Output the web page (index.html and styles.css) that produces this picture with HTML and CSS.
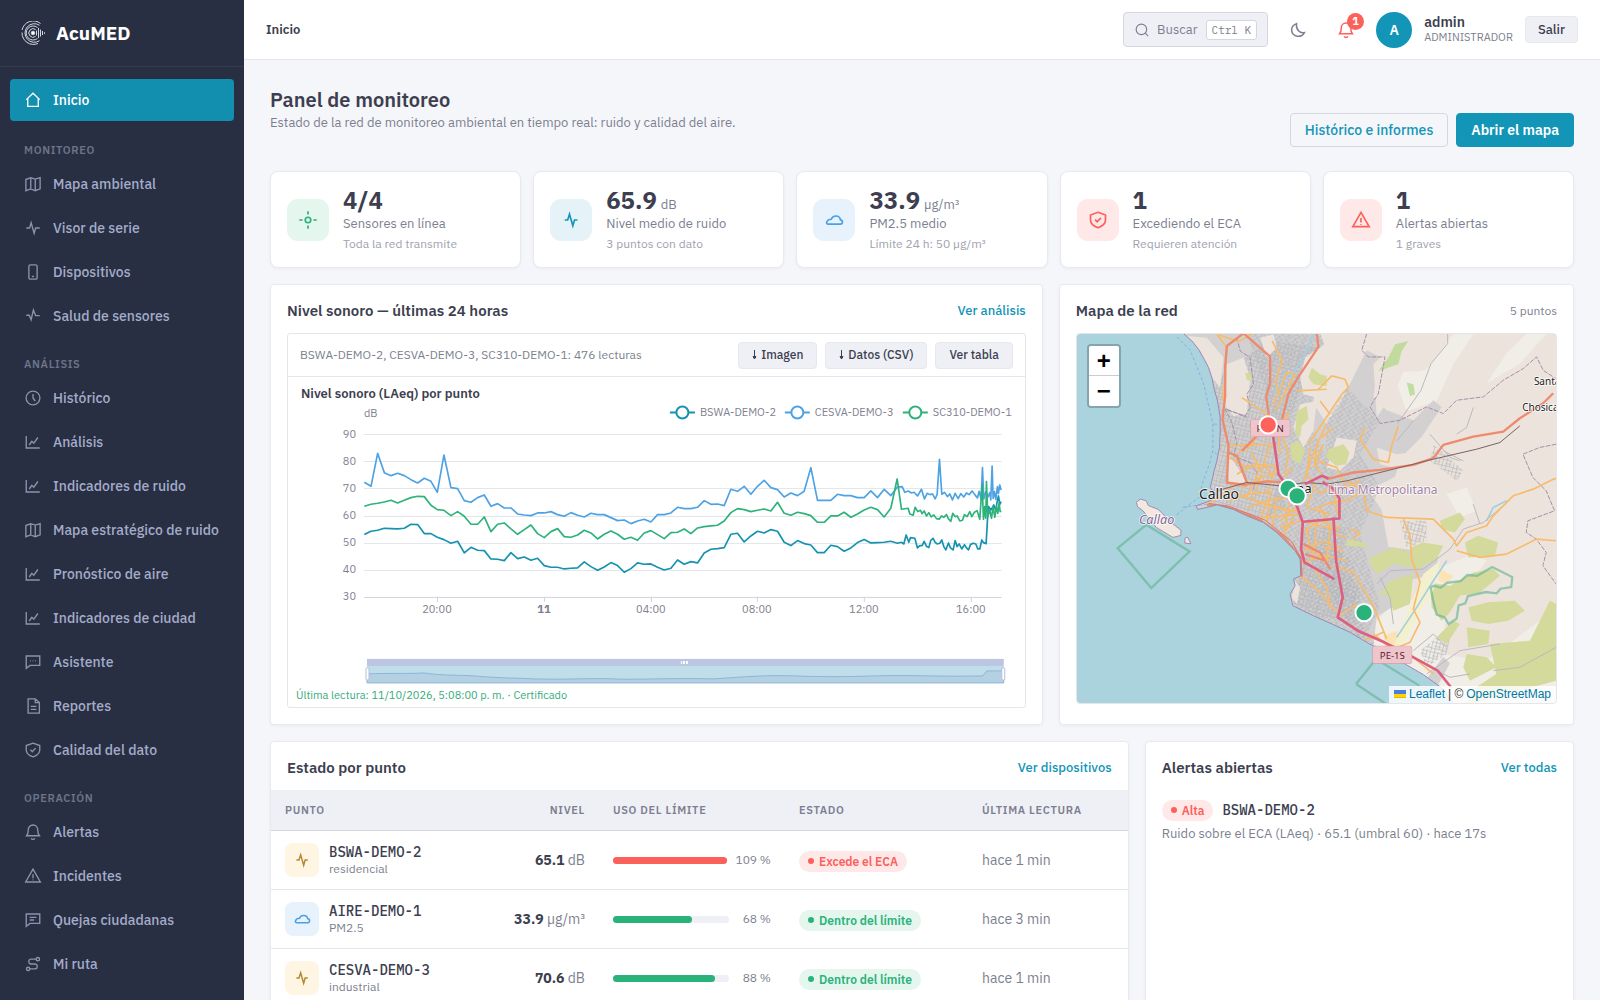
FILE: index.html
```html
<!DOCTYPE html>
<html lang="es">
<head>
<meta charset="utf-8">
<meta name="viewport" content="width=device-width, initial-scale=1">
<title>AcuMED · Panel de monitoreo</title>
<link rel="stylesheet" href="styles.css">
</head>
<body>
<svg class="sprite" aria-hidden="true">
  <symbol id="i-home" viewBox="0 0 24 24"><path d="M3 11.500 12 3l9 8.500M5 10v10.500h14V10"/></symbol>
  <symbol id="i-map" viewBox="0 0 24 24"><path d="M2.500 6 9 3.500 15 5.500l6.500-2v15L15 21l-6-2.500L2.500 21zM9 3.500v15M15 5.500V21"/></symbol>
  <symbol id="i-pulse" viewBox="0 0 24 24"><path d="M3 12h4.500l2-7 4 14 2-7H21"/></symbol>
  <symbol id="i-wave" viewBox="0 0 24 24"><path d="M4.500 12H8l2.200-7 4 14 2-7h3.500"/></symbol>
  <symbol id="i-beat" viewBox="0 0 24 24"><path d="M3 11h4l2.500 6L12.500 4l3 7.500H21"/></symbol>
  <symbol id="i-phone" viewBox="0 0 24 24"><rect x="6.500" y="2.500" width="11" height="19" rx="2"/><path d="M10.500 18h3"/></symbol>
  <symbol id="i-clock" viewBox="0 0 24 24"><circle cx="12" cy="12" r="9.200"/><path d="M12 6.500V12l3 4"/></symbol>
  <symbol id="i-chart" viewBox="0 0 24 24"><path d="M3 4v16h18M7 16l3.500-5 2.500 2.500L18.500 6"/></symbol>
  <symbol id="i-chat" viewBox="0 0 24 24"><path d="M3 4h18v12.500H8L3 20.500zM8 10.300h.800M11.600 10.300h.800M15.200 10.300h.800"/></symbol>
  <symbol id="i-talk" viewBox="0 0 24 24"><path d="M3 4h18v12.500H8L3 20.500zM7.500 8.500h9M7.500 12h6"/></symbol>
  <symbol id="i-doc" viewBox="0 0 24 24"><path d="M5.500 2.500H15l5.500 5v14h-15zM15 2.500v5h5.500M9 12.500h7.500M9 16.500h7.500"/></symbol>
  <symbol id="i-shield" viewBox="0 0 24 24"><path d="M12 2.800 21 6v6c0 4.500-4 7.500-9 9.200C7 19.500 3 16.500 3 12V6zM8.500 11.500l2.500 2.700 4.500-4.700"/></symbol>
  <symbol id="i-bell" viewBox="0 0 24 24"><path d="M3.500 17h17c-1.700-2-2.200-4-2.200-8 0-3.500-2.600-6.300-6.300-6.300S5.700 5.500 5.700 9c0 4-.500 6-2.200 8zM9.500 20.500c1 1.800 4 1.800 5 0"/></symbol>
  <symbol id="i-warn" viewBox="0 0 24 24"><path d="M12 2.800 21.800 20H2.200zM12 9.500V15M12 16.800v1"/></symbol>
  <symbol id="i-route" viewBox="0 0 24 24"><circle cx="5.500" cy="18.500" r="2.200"/><circle cx="18.500" cy="5.500" r="2.200"/><path d="M16.300 5.500H9a3.300 3.300 0 0 0 0 6.500h6a3.300 3.300 0 0 1 0 6.500H7.700"/></symbol>
  <symbol id="i-search" viewBox="0 0 24 24"><circle cx="11" cy="11" r="9"/><path d="m17.500 17.500 5 5"/></symbol>
  <symbol id="i-moon" viewBox="0 0 24 24"><path d="M10 3.500C6 5 3.500 8 3.500 12a9 9 0 0 0 17 3.500c-6 1.500-11.500-4-10.500-12z"/></symbol>
  <symbol id="i-cloud" viewBox="0 0 24 24"><path d="M5 17h14.300a2.600 2.600 0 0 0 .400-5.200C19.300 8.900 17.300 7.200 14.300 7.200c-2.800 0-4.800 1.500-5.600 3.900C6 11.100 3.700 12.600 3.200 15c-.200 1.200.600 2 1.800 2z"/></symbol>
  <symbol id="i-sensor" viewBox="0 0 24 24"><circle cx="12" cy="12" r="3.300"/><path d="M12 1.500v4M12 18.500v4M1.500 12h4M18.500 12h4"/></symbol>
  <symbol id="i-down" viewBox="0 0 5 10"><path d="M2.500 0v7M1 6.500h3L2.500 9z"/></symbol>
</svg>
<div class="app">
  <aside class="sidebar">
    <div class="brand">
      <svg viewBox="0 0 24 24" class="logo"><circle cx="12" cy="12" r="1.800" class="dot"/><path d="M14.600 8.500A4.300 4.300 0 1 0 14.600 15.500M16.500 6.500A7 7 0 1 0 16.500 17.500M18.500 4.300A9.300 9.300 0 1 0 18.500 19.700M19.500 2.500A11.500 11.500 0 0 0 1 9M1 11.500A11.500 11.500 0 0 0 17 22.500M15.500 9.500v5M17.500 7v10M19.500 8.500v7M21.500 10v4M23.500 11.300v1.500"/></svg>
      <span>AcuMED</span>
    </div>
    <nav class="menu">
      <a class="item active" href="#inicio"><svg><use href="#i-home"/></svg>Inicio</a>
      <h2>MONITOREO</h2>
      <a class="item" href="#mapa"><svg><use href="#i-map"/></svg>Mapa ambiental</a>
      <a class="item" href="#visor"><svg><use href="#i-pulse"/></svg>Visor de serie</a>
      <a class="item" href="#dispositivos"><svg><use href="#i-phone"/></svg>Dispositivos</a>
      <a class="item" href="#salud"><svg><use href="#i-beat"/></svg>Salud de sensores</a>
      <h2>ANÁLISIS</h2>
      <a class="item" href="#historico"><svg><use href="#i-clock"/></svg>Histórico</a>
      <a class="item" href="#analisis"><svg><use href="#i-chart"/></svg>Análisis</a>
      <a class="item" href="#ruido"><svg><use href="#i-chart"/></svg>Indicadores de ruido</a>
      <a class="item" href="#estrategico"><svg><use href="#i-map"/></svg>Mapa estratégico de ruido</a>
      <a class="item" href="#pronostico"><svg><use href="#i-chart"/></svg>Pronóstico de aire</a>
      <a class="item" href="#ciudad"><svg><use href="#i-chart"/></svg>Indicadores de ciudad</a>
      <a class="item" href="#asistente"><svg><use href="#i-chat"/></svg>Asistente</a>
      <a class="item" href="#reportes"><svg><use href="#i-doc"/></svg>Reportes</a>
      <a class="item" href="#calidad"><svg><use href="#i-shield"/></svg>Calidad del dato</a>
      <h2>OPERACIÓN</h2>
      <a class="item" href="#alertas"><svg><use href="#i-bell"/></svg>Alertas</a>
      <a class="item" href="#incidentes"><svg><use href="#i-warn"/></svg>Incidentes</a>
      <a class="item" href="#quejas"><svg><use href="#i-talk"/></svg>Quejas ciudadanas</a>
      <a class="item" href="#ruta"><svg><use href="#i-route"/></svg>Mi ruta</a>
    </nav>
  </aside>

  <div class="page">
    <header class="topbar">
      <strong class="crumb">Inicio</strong>
      <button class="search" type="button"><svg><use href="#i-search"/></svg>Buscar<kbd>Ctrl K</kbd></button>
      <button class="round" type="button" aria-label="Tema oscuro"><svg><use href="#i-moon"/></svg></button>
      <button class="round bell" type="button" aria-label="Alertas"><svg><use href="#i-bell"/></svg><span class="count">1</span></button>
      <span class="avatar">A</span>
      <div class="who"><strong>admin</strong><span>ADMINISTRADOR</span></div>
      <button class="soft" type="button">Salir</button>
    </header>

    <main class="content">
      <div class="head">
        <div class="heading">
          <h1>Panel de monitoreo</h1>
          <p>Estado de la red de monitoreo ambiental en tiempo real: ruido y calidad del aire.</p>
        </div>
        <div class="actions">
          <a class="btn outline" href="#informes">Histórico e informes</a>
          <a class="btn solid" href="#mapa">Abrir el mapa</a>
        </div>
      </div>

      <section class="kpis">
        <article class="card kpi"><span class="chip green"><svg><use href="#i-sensor"/></svg></span><div><div class="value"><b>4/4</b></div><p>Sensores en línea</p><small>Toda la red transmite</small></div></article>
        <article class="card kpi"><span class="chip teal"><svg><use href="#i-wave"/></svg></span><div><div class="value"><b>65.9</b><span>dB</span></div><p>Nivel medio de ruido</p><small>3 puntos con dato</small></div></article>
        <article class="card kpi"><span class="chip blue"><svg><use href="#i-cloud"/></svg></span><div><div class="value"><b>33.9</b><span>µg/m³</span></div><p>PM2.5 medio</p><small>Límite 24 h: 50 µg/m³</small></div></article>
        <article class="card kpi"><span class="chip red"><svg><use href="#i-shield"/></svg></span><div><div class="value"><b>1</b></div><p>Excediendo el ECA</p><small>Requieren atención</small></div></article>
        <article class="card kpi"><span class="chip red"><svg><use href="#i-warn"/></svg></span><div><div class="value"><b>1</b></div><p>Alertas abiertas</p><small>1 graves</small></div></article>
      </section>

      <section class="row charts">
        <article class="card pad">
          <div class="card-head"><h3>Nivel sonoro — últimas 24 horas</h3><a href="#analisis">Ver análisis</a></div>
          <div class="plot">
            <div class="plot-bar">
              <span>BSWA-DEMO-2, CESVA-DEMO-3, SC310-DEMO-1: 476 lecturas</span>
              <button class="soft" type="button"><svg><use href="#i-down"/></svg>Imagen</button>
              <button class="soft" type="button"><svg><use href="#i-down"/></svg>Datos (CSV)</button>
              <button class="soft" type="button">Ver tabla</button>
            </div>
            <svg class="chart" viewBox="0 0 737 310" role="img" aria-label="Nivel sonoro (LAeq) por punto">
              <text class="ct" x="13" y="21">Nivel sonoro (LAeq) por punto</text>
              <text x="76" y="40">dB</text>
              <g class="legend">
                <g stroke="#1592b0"><path d="M382 35.500h25"/><circle cx="394.500" cy="35.500" r="6"/></g><text x="412" y="39">BSWA-DEMO-2</text>
                <g stroke="#4da2e4"><path d="M497 35.500h25"/><circle cx="509.500" cy="35.500" r="6"/></g><text x="527" y="39">CESVA-DEMO-3</text>
                <g stroke="#2eb27c"><path d="M615 35.500h25"/><circle cx="627.500" cy="35.500" r="6"/></g><text x="645" y="39">SC310-DEMO-1</text>
              </g>
              <path class="grid" d="M76 57.500h638M76 84.500h638M76 111.500h638M76 139.500h638M76 166.500h638M76 193.500h638"/>
              <path class="axis" d="M76 220.500h638M149.500 220v5M256.500 220v5M363.500 220v5M469.500 220v5M576.500 220v5M683.500 220v5"/>
              <g class="ylab"><text x="68" y="61">90</text><text x="68" y="88">80</text><text x="68" y="115">70</text><text x="68" y="142">60</text><text x="68" y="169">50</text><text x="68" y="196">40</text><text x="68" y="223">30</text></g>
              <g class="xlab"><text x="149" y="236">20:00</text><text x="256" y="236" font-weight="700">11</text><text x="363" y="236">04:00</text><text x="469" y="236">08:00</text><text x="576" y="236">12:00</text><text x="683" y="236">16:00</text></g>
              <g class="series" transform="translate(-18 -57) scale(.33333)">
                <path stroke="#1592b0" d="M283 644 303 634 323 631 343 625 363 626 383 627 403 625 423 613 443 614 463 641 483 641 502 652 522 659 543 670 563 664 583 699 603 682 623 691 643 692 663 717 683 718 703 722 723 698 743 716 763 711 783 721 803 715 823 737 843 742 863 742 883 747 903 745 923 744 943 726 963 740 983 751 1003 741 1023 728 1043 737 1063 757 1083 746 1103 729 1123 733 1143 732 1163 742 1183 750 1203 745 1223 720 1243 733 1263 725 1283 729 1303 699 1323 688 1343 686 1363 683 1383 643 1403 640 1423 666 1443 648 1463 634 1483 639 1503 629 1523 634 1543 667 1563 677 1583 662 1603 671 1623 675 1643 698 1663 698 1683 676 1703 680 1723 694 1743 684 1763 668 1783 659 1803 669 1823 668 1843 667 1863 664 1883 670 1895 667 1902 672 1909 645 1917 667 1922 653 1935 655 1943 684 1950 677 1957 677 1963 664 1970 679 1977 683 1983 661 1990 655 1996 667 2002 672 2010 670 2016 660 2022 680 2028 690 2036 669 2042 684 2050 690 2056 662 2062 680 2068 672 2076 687 2084 674 2090 684 2096 690 2102 674 2110 670 2118 672 2124 687 2130 687 2136 660 2141 668 2149 671 2153 600 2156 560 2164 570 2172 555 2178 572 2182 545 2186 528 2190 553 2194 545"/>
                <path stroke="#4da2e4" d="M283 487 303 499 323 400 343 458 363 467 383 460 403 467 423 479 443 489 463 475 483 484 502 517 522 405 543 503 563 506 583 542 603 547 623 533 643 525 663 559 683 551 703 564 723 564 743 582 763 585 783 587 803 579 823 579 843 575 863 584 883 589 903 578 923 586 943 591 963 580 983 584 1003 584 1023 593 1043 602 1063 600 1083 611 1103 603 1123 598 1143 606 1163 584 1183 584 1203 579 1223 562 1243 566 1263 566 1283 562 1303 542 1323 553 1343 552 1363 557 1383 508 1403 514 1423 499 1443 523 1463 499 1483 481 1503 503 1523 509 1543 531 1563 519 1583 527 1603 514 1623 443 1643 541 1683 541 1703 523 1723 527 1743 527 1763 533 1783 533 1803 513 1823 533 1843 508 1863 527 1883 501 1897 500 1905 517 1915 513 1925 519 1933 517 1943 528 1955 508 1964 537 1972 520 1980 524 1988 522 1996 537 2002 523 2009 418 2016 523 2024 517 2033 530 2040 522 2048 540 2056 520 2065 536 2073 521 2082 531 2090 519 2098 524 2107 513 2115 524 2123 534 2128 514 2134 537 2138 443 2142 537 2148 515 2154 532 2160 518 2163 540 2167 438 2170 535 2174 515 2178 538 2183 500 2186 520 2190 495 2194 510"/>
                <path stroke="#2eb27c" d="M283 559 303 553 323 550 343 546 363 541 383 549 403 541 423 533 443 529 463 530 483 556 502 569 522 571 543 587 563 575 583 589 603 613 623 613 643 591 663 635 683 613 703 609 723 627 743 643 763 629 783 615 803 641 823 653 843 635 863 626 883 650 903 652 923 645 943 631 963 639 983 657 1003 643 1023 633 1043 643 1063 658 1083 652 1103 661 1123 639 1143 632 1163 644 1183 656 1203 638 1223 637 1243 627 1263 641 1283 624 1303 620 1323 618 1343 616 1363 603 1383 578 1403 566 1423 569 1443 575 1463 571 1483 567 1503 573 1523 547 1543 580 1563 586 1583 577 1603 581 1623 587 1643 607 1663 607 1683 588 1703 588 1723 577 1743 592 1763 582 1783 570 1803 562 1823 569 1843 591 1863 565 1882 477 1895 568 1915 565 1920 582 1930 586 1936 562 1944 575 1952 571 1957 581 1963 573 1970 588 1977 578 1984 591 1992 585 2000 596 2008 598 2015 588 2022 592 2030 584 2036 597 2043 604 2049 580 2056 590 2062 588 2070 603 2078 601 2084 584 2092 590 2100 575 2106 590 2114 577 2122 572 2130 598 2137 492 2141 598 2145 560 2148 595 2150 485 2154 590 2160 570 2165 595 2170 560 2175 592 2180 560 2184 580 2188 548 2191 575 2194 572"/>
              </g>
              <g class="slider">
                <rect x="79" y="282" width="637" height="8" fill="#bcc5e2"/>
                <rect x="79" y="289" width="637" height="17" fill="#bfdeea"/>
                <path class="area" d="M79 297c30-1 40 0 57-1 20 3 35 2 50 3 20 2 40 2 60 3 30 1 60-1 80 0 20 1 60-1 100 0 30-2 50-4 80-3 30 1 50 1 80 0 40-1 70 1 109 0l4-5h17v12H79z"/>
                <path fill="#fff" d="M393 284h1v3h-1zM395 284h2v3h-2zM398 284h2v3h-2z"/>
                <rect class="grip" x="78" y="291" width="3" height="12" rx="1"/><rect class="grip" x="714" y="291" width="3" height="12" rx="1"/>
              </g>
            </svg>
            <p class="plot-foot">Última lectura: 11/10/2026, 5:08:00 p. m. · Certificado</p>
          </div>
        </article>

        <article class="card pad net">
          <div class="card-head"><h3>Mapa de la red</h3><span>5 puntos</span></div>
          <div class="map">
            <svg viewBox="50 38 1439 1110" preserveAspectRatio="xMidYMid slice" role="img" aria-label="Mapa de Lima y Callao">
              <defs>
                <pattern id="st1" width="34" height="30" patternUnits="userSpaceOnUse" patternTransform="rotate(14)"><path d="M0 4h34M0 15h20M0 23h34M5 0v30M16 0v23M27 4v26"/></pattern>
                <pattern id="st2" width="36" height="32" patternUnits="userSpaceOnUse" patternTransform="rotate(-32)"><path d="M0 5h36M8 17h28M0 26h36M6 0v32M18 5v21M29 0v17"/></pattern>
                <clipPath id="land"><path d="M370 38 395 60 415 85 432 115 445 140 455 170 462 205 472 240 480 290 480 330 478 380 470 420 462 450 455 480 450 500 466 520 450 540 408 555 412 566 440 560 470 552 520 566 560 585 610 605 650 635 680 665 705 690 720 715 722 765 700 775 705 795 690 820 698 855 760 885 820 912 870 935 920 965 955 985 1035 1030 1090 1062 1140 1098 1165 1125 1185 1150H1490V37z"/></clipPath>
              </defs>
              <path fill="#abd3de" d="M50 37h1440v1112H50z"/>
              <g clip-path="url(#land)">
                <path fill="#ece4dc" d="M350 37h1140v1112H350z"/>
                <path fill="#f1eee8" d="M1000 160c60-20 90 10 120-40l60-80h60l-60 90-50 110-90 30zM1400 38h60l-80 90-100 60 60-90zM1160 520l60-20 30 70-50 20zM900 950l100-100 80-20 60-90 100-40 40 20-120 160-20 120 140 20 160-120 149-20v277H1180z"/>
                <path class="urban" d="M370 38h410l20 50-30 70-10 90 40 60 40-60 40-80 40-80 40 20-20 120 40 40 80 30 60-60 25 20-60 90-60 60-20 60-80 40 40 60 20 110 70 10 80 10-5 60-80 20-20 60-80 50-10 90-20 50 30 80 60 40 80-60 60-80 20 20-60 110-60 60-120-50-200-120-220-85-10-40 20-70-10-60-150-110-250-60 40-110 20-140-30-130z"/>
                <path class="st" fill="url(#st1)" d="M460 180 620 60 780 80 700 260 640 420 680 560 600 600 440 555 480 400z"/>
                <path class="st" fill="url(#st2)" d="M560 38h220l20 50-60 200 60 120-20 240 100 70 10 150 40 80 60 80-60 20-220-100-10-120-100-170 60-200-40-240z"/>
                <path class="st" fill="url(#st1)" d="M720 620 860 620 840 740 900 800 900 900 780 890 700 850 720 760z"/>
                <path class="st" fill="url(#st2)" d="M800 300 860 200 900 240 960 300 900 400 960 500 900 640 960 860 900 980 780 760z"/>
                <path class="st" fill="url(#st1)" d="M1020 600h80v60l-60 20zM1120 370l90 80-20 30-80-60zM1080 990l100-80-20 90-60 40z"/>
                <path fill="#ece4dc" d="M500 130l50-20 20 60-10 110-40 5-25-30zM600 50l40-10 10 40-30 30zM735 110l75-50v180l-80-20-10-50zM720 250l50-10-10 90-30 50-30-60zM380 45l60 5 50 60-10 90-25-30-35-80zM505 400l55 80-20 12-35-5zM800 440l30-90 60 10-10 50-40 40zM940 130l60-60 50 40-40 90-60 90zM950 380l60 20 80-10-60 60-70-20zM705 780l15 20-10 50-15-20z"/>
                <g class="olive"><path d="M755 140l25 20 20 5v30l-40-5-15-20zM710 270l30-15 5 40-20 20-5 35-15-10zM690 370l25-10 20 30-15 40-25-15zM555 155l20 5v20l-15-3zM805 385l45-15 18 25-10 35-30 5-30-25zM930 710l70-30 40 10 20 50-60-10-50 30-20-30zM1050 680l40-15 60 10-20 40-60 30-20-30zM990 780l70-20-10 90-50 20-20-50-25 5zM1140 600l60-25 15 20-30 40-40-10zM1215 665l40-20 60 20-10 40-80 5zM1110 785l60 10 70-40 60-10 20 20-60 50-60 10-30 50-25 25-30-40zM1225 860l60-15 80-5 30 30-50 30-60 10-50-10zM1220 920l70 10-5 40-60 10zM1290 970l120-10 60-120 19 10v230l-220 60-60 20 40-60 60-40zM860 655l50 10 20 15-70-5zM1220 1000l60 10 30 30-80 40-20-40zM1130 950l50-50 20 10-40 60z"/></g>
                <g fill="#b7d88e"><path d="M985 110l20-40 40-10-20 30-10 40-60 20zM1050 225l-10-40 20 5 5 30z" opacity=".8"/></g>
                <path fill="#fbe3b4" d="M1140 745l40 20-20 25-25-10zM970 945l40-15 10 40-40 10z"/>
                <path fill="#f3f0cd" d="M1090 760l50-40-20 90-50 80-40 80-30 10 40-100z"/>
                <g fill="none" stroke="#a4cfe0" stroke-width="5"><path d="M1010 950l60-90 50-80 40-60M1280 600l20-40 40-20M690 170l40-60 30-72M640 215l50-60"/></g>
                <g fill="none" stroke="#b9b9bd" stroke-width="3"><path d="M950 790l40-40 100-5 80-60 40-60 60-20 60-50M1163 38v30l-50 60-30 80-70 100M1060 300l-50 60M1110 340l60 70 30 10M1150 390l60 30M1240 260l-20 60-30 20M1260 610l-20-60M960 770l30 60 10 80M1060 990l60-50 40 40M1100 1060l100-70 120-20M1300 1050l80-10 109-60M1110 1040l60 30 60-10"/></g>
                <g class="boundary"><path d="M530 50l10 40 30 20 10 80-20 30 10 40-15 25-60-20 20 40 15 60-10 40 50 20 20 30-10 50M500 265l60 25M920 38l-15 50 20 20 50 0-20 110-25 40 30 50 60-10 80-40 50 20 40-40 80-10 60-50 60-35 40-35 20 40 60 40M1489 370l-50 10-50 20 30 70 40 40 25 60-80 30-5 35 30 20 30 40-10 40 40 55"/></g>
                <g class="sec"><path d="M470 40l30 40-5 80-8 80M545 230l90 60M500 375l140-5 10 60-30 90M530 400l60-50 30-60M505 410l60 30 60 0M640 250l40-95 25 5-60 110M710 210l90-5M545 500l60-30 50-15M440 555l80-60 100-15M600 600l20-60 60-10 40-20M520 515l110 40 90 20M560 560l100-30M630 370l-20 60 30 40M660 400l-5-60 30-60M750 380l-10 80 40 60 30-20M745 370l60-90 40-60 20-20-10-25-40-10-40 40M770 420l60 20 30 60M790 370l-30 70M720 640l60-40 60 20M730 690l60-30 50 20M660 620l60-20 120 30M780 560l30 60-10 100M860 480l50 30 10 60 60 20 140 5 60 60 10 20 30-40 60-20 20-30 60-60 60-20 60-30 60-15M915 320l-15 35 40 60 45 10 10-50 20-60M1030 595l20 50 5 70 25 70-20 80 20 40-30 60-60 25M1190 690l70 20 80-10 90-45 59 5M820 735l60 20 60 100 20 50 20 50M720 765l50 40 60 70M830 890l60-40M940 940l60 50 60 20 60 50M900 965l70-30M745 430l30-60M830 540l-60 20M660 600l70-60M600 440l-40 90"/>
                  <path d="M505 540l60-20 70-6M530 460l50-30 70 6M575 395l30 60-20 60M630 515l-10 90M650 530l-14 90M690 540l-20 110M580 540l100 30M610 590l110-10M700 590l-30 50M760 500l-20 60 70 20M740 620l10 70 60 30M770 600l-10 110M720 725l80-20 60 15M800 510l60-10 40-20M810 550l60-15 40-30M830 580l-6-80M860 650l-40-10M870 625l30 10-20 20M850 690l-60-10M760 740l40 60 10 60M800 310l-30 60-6 60 20 30M820 320l-35 30M780 240l30 40M680 280l-15 60 20 60-10 60M600 330l-40 60M700 440l-30 30M730 480l20-50M476 42l60 20 40-24M636 60l30 60-20 60 10 40"/></g>
                <g class="trunk"><path d="M500 75l-5 60 0 90-8 70 18 80-5 110 60 8M500 75l50-38 80 70 0 80-12 40 10 70M770 38l5 40-60 90-30 50-20 80M505 395l25 10 30 80M545 390l60-60M560 490l60-8 60 2M440 553l60 5 100 40 70 50 50 60 5 60M730 670l50 25 30 50M800 475l80-20 80-8 100-15 60-20 30-40 90-25 90-15 50-40 70-45 30-30M735 700l60 20"/></g>
                <path fill="none" stroke="#7d5f62" stroke-width="3" d="M470 510l90-25 100 10 80-10 60 5 60-10 60-15 200-50 130-30 70-20 60-50"/>
                <g class="mway"><path d="M632 300l15 100 8 60 25 35 30 60 18 50-5 80 10 40 90 50M728 603l110-10 0-60-20-30-30-20M735 490l50-25 20 8M820 590l8 130 20 110-15 60 60 40 80 35 60 30 100 55 40 50"/></g>
                <path fill="none" stroke="#e2725e" stroke-width="3" d="M445 548l60 8 110 42 80 65 28 50v50"/>
              </g>
              <path fill="none" stroke="#9a86b4" stroke-width="3" d="M370 38 395 60 415 85 432 115 445 140 455 170 462 205 472 240 480 290 480 330 478 380 470 420 462 450 455 480 450 500 466 520 450 540 408 555 412 566 440 560 470 552 520 566 560 585 610 605 650 635 680 665 705 690 720 715 722 765 700 775 705 795 690 820 698 855 760 885 820 912 870 935 920 965 955 985 1035 1030 1090 1062 1140 1098 1165 1125"/>
              <path fill="#f1e8e0" stroke="#a58bb0" stroke-width="3" d="M228 545l12-10 18 5 6 14 30 12 40 40 28 22 0 16-24 6-50-30-40-50-16-12zM374 652l8-3 10 20-18-2z"/>
              <g fill="none" stroke="#6f9fe6" stroke-width="2" stroke-dasharray="9 7"><path d="M350 48l40 40 40 100 28 120 0 80-10 40-22 60-8 40-70 55M470 310h-12M470 400l-12-10M440 550l-80 10"/></g>
              <g fill="none" stroke="#67b394" stroke-opacity=".65" stroke-width="7"><path d="M172 682l86-70 130 80-115 110zM888 1090l60-75 130 80M888 1090l90 60M1112 800l10-5 20 6 20-15 40-5 20-18 30 2 45-26 60 30-3 30-32 5-12 14-32-4-54 12-8 22-20 6-6 40-24 16-12-20-24-8-10-40z"/></g>
              <g class="labels">
                <text x="416" y="535" font-size="42">Callao</text>
                <text class="isle" x="236" y="609" font-size="38">Callao</text>
                <text x="664" y="517" font-size="40">Lima</text>
                <text class="zone" x="802" y="519" font-size="36">Lima Metropolitana</text>
                <text x="1422" y="192" font-size="30">Santa Eulalia</text>
                <text x="1387" y="271" font-size="30">Chosica</text>
                <g class="shield"><rect x="572" y="296" width="117" height="51" rx="5"/><text x="630" y="332">PE-1N</text><rect x="938" y="977" width="117" height="51" rx="5"/><text x="997" y="1014">PE-1S</text></g>
              </g>
              <g class="pins"><circle cx="624" cy="312" r="26" fill="#ff625c"/><circle cx="684" cy="503" r="26"/><circle cx="711" cy="525" r="26"/><circle cx="912" cy="876" r="26"/></g>
            </svg>
            <div class="zoom"><button type="button" aria-label="Acercar">+</button><button type="button" aria-label="Alejar">−</button></div>
            <div class="credit"><svg viewBox="0 0 12 8"><path fill="#4c7be1" d="M0 0h12v4H0z"/><path fill="#ffd500" d="M0 4h12v3H0z"/><path fill="#e0bc00" d="M0 7h12v1H0z"/></svg> <a href="#leaflet">Leaflet</a> | © <a href="#osm">OpenStreetMap</a></div>
          </div>
        </article>
      </section>

      <section class="row status">
        <article class="card">
          <div class="card-head inset"><h3>Estado por punto</h3><a href="#dispositivos">Ver dispositivos</a></div>
          <table>
            <colgroup><col class="c1"><col class="c2"><col class="c3"><col class="c4"><col class="c5"></colgroup>
            <thead><tr><th>PUNTO</th><th class="num">NIVEL</th><th>USO DEL LÍMITE</th><th>ESTADO</th><th>ÚLTIMA LECTURA</th></tr></thead>
            <tbody>
              <tr><td><div class="point"><span class="chip small amber"><svg><use href="#i-wave"/></svg></span><div><code>BSWA-DEMO-2</code><small>residencial</small></div></div></td><td class="num"><b>65.1</b> dB</td><td><div class="use"><span class="bar over"><i style="width:100%"></i></span><span>109 %</span></div></td><td><span class="badge bad">Excede el ECA</span></td><td>hace 1 min</td></tr>
              <tr><td><div class="point"><span class="chip small blue"><svg><use href="#i-cloud"/></svg></span><div><code>AIRE-DEMO-1</code><small>PM2.5</small></div></div></td><td class="num"><b>33.9</b> µg/m³</td><td><div class="use"><span class="bar"><i style="width:68%"></i></span><span>68 %</span></div></td><td><span class="badge ok">Dentro del límite</span></td><td>hace 3 min</td></tr>
              <tr><td><div class="point"><span class="chip small amber"><svg><use href="#i-wave"/></svg></span><div><code>CESVA-DEMO-3</code><small>industrial</small></div></div></td><td class="num"><b>70.6</b> dB</td><td><div class="use"><span class="bar"><i style="width:88%"></i></span><span>88 %</span></div></td><td><span class="badge ok">Dentro del límite</span></td><td>hace 1 min</td></tr>
            </tbody>
          </table>
        </article>
        <article class="card pad alerts">
          <div class="card-head"><h3>Alertas abiertas</h3><a href="#alertas">Ver todas</a></div>
          <div class="alert"><span class="badge bad">Alta</span><code>BSWA-DEMO-2</code></div>
          <p>Ruido sobre el ECA (LAeq) · 65.1 (umbral 60) · hace 17s</p>
        </article>
      </section>
    </main>
  </div>
</div>
</body>
</html>
```
FILE: styles.css
```css
:root {
  --ink: #3d3f50;
  --muted: #7c7f8f;
  --faint: #a0a2ae;
  --line: #e4e6eb;
  --soft: #eff0f6;
  --primary: #1295b7;
  --green: #2ab27b;
  --blue: #4aa0e6;
  --red: #fb605b;
  --mono: "IBM Plex Mono", "Liberation Mono", monospace;
}
* { box-sizing: border-box; }
html { scrollbar-width: none; }
body, h1, h2, h3, p { margin: 0; }
body {
  background: #f5f6fa;
  color: var(--ink);
  font: 14px/20px "IBM Plex Sans", Roboto, sans-serif;
}
a { color: inherit; text-decoration: none; }
button { font: inherit; color: inherit; cursor: pointer; }
svg { display: block; fill: none; stroke: currentColor; stroke-width: 2; }
.sprite { position: absolute; width: 0; height: 0; }
small, code { display: block; }

.app { display: grid; grid-template-columns: 244px minmax(0, 1fr); min-height: 100vh; }

/* Sidebar */
.sidebar {
  position: sticky; top: 0; height: 100vh; overflow: hidden;
  background: #282f42; color: #a4acca;
}
.brand {
  display: flex; align-items: center; gap: 11px;
  height: 67px; padding: 0 21px;
  border-bottom: 1px solid #343a4c;
  color: #fff; font-size: 19px; font-weight: 700;
}
.logo { width: 24px; height: 24px; color: #d5d8e2; stroke-width: 1; }
.logo .dot { fill: #fff; }
.menu { display: grid; gap: 2px; padding: 12px 10px; }
.item {
  display: flex; align-items: center; gap: 11px;
  height: 42px; padding: 0 14px; border-radius: 4px;
  font-weight: 500;
}
.item svg { width: 18px; height: 18px; color: #8c93ae; stroke-width: 1.8; }
.item.active { margin-bottom: 2px; background: #128eaf; color: #fff; }
.item.active svg { color: #fff; }
.menu h2 {
  padding: 17px 14px 3px; color: #6d7389;
  font-size: 11px; line-height: 16px; font-weight: 600; letter-spacing: .06em;
}

/* Top bar */
.topbar {
  display: flex; align-items: center; gap: 12px;
  height: 60px; padding: 0 22px;
  background: #fff; border-bottom: 1px solid var(--line);
}
.crumb { margin-right: auto; font-size: 13px; font-weight: 600; }
.search {
  display: flex; align-items: center; gap: 8px;
  height: 35px; padding: 0 10px 0 11px;
  background: var(--soft); border: 1px solid #d5d7e0; border-radius: 4px;
  color: var(--muted); font-size: 13px;
}
.search svg { width: 14px; height: 14px; }
kbd {
  padding: 0 5px; background: #fff; border: 1px solid #d5d7e0; border-radius: 3px;
  font: 11px/18px var(--mono);
}
.round { display: grid; place-items: center; width: 36px; height: 36px; padding: 0; border: 0; background: none; color: var(--muted); }
.round svg { width: 18px; height: 18px; }
.bell { position: relative; color: var(--red); }
.count {
  position: absolute; top: 1px; right: 0; width: 17px; height: 17px;
  border-radius: 50%; background: var(--red); color: #fff;
  font-size: 11px; line-height: 17px; font-weight: 700;
}
.avatar {
  width: 36px; border-radius: 50%; background: var(--primary); color: #fff;
  line-height: 36px; font-weight: 600; text-align: center;
}
.who strong, .who span { display: block; line-height: 15px; }
.who strong { font-weight: 600; }
.who span { color: var(--muted); font-size: 11px; }
.soft {
  display: flex; align-items: center; gap: 4px;
  height: 27px; padding: 0 12px;
  background: var(--soft); border: 1px solid #e7e8ef; border-radius: 4px;
  font-size: 13px; font-weight: 500;
}
.soft svg { width: 5px; height: 10px; fill: currentColor; stroke-width: 1; }

/* Page */
.content { display: grid; gap: 16px; padding: 26px; }
.head { display: flex; justify-content: space-between; align-items: flex-end; margin-bottom: 8px; }
.heading { margin-bottom: 14px; }
h1 { font-size: 20px; line-height: 27px; font-weight: 600; }
.heading p { color: var(--muted); font-size: 13px; }
.actions { display: flex; gap: 8px; }
.btn { padding: 0 14px; border: 1px solid var(--primary); border-radius: 4px; line-height: 32px; font-weight: 500; }
.outline { border-color: #d5d7e0; color: var(--primary); }
.solid { background: var(--primary); color: #fff; font-weight: 600; }
.card { min-width: 0; background: #fff; border: 1px solid #e8eaef; border-radius: 4px; box-shadow: 0 1px 3px rgba(60, 70, 100, .06); }
.pad { padding: 16px; }

.kpis { display: grid; grid-template-columns: repeat(5, minmax(0, 1fr)); gap: 12px; }
.kpi { display: flex; align-items: center; gap: 14px; padding: 14px 16px; border-radius: 8px; }
.value { display: flex; align-items: baseline; gap: 4px; height: 28px; }
.value b { font-size: 24px; line-height: 28px; font-weight: 700; }
.value span { color: var(--muted); font-size: 13px; }
.kpi p { color: var(--muted); font-size: 13px; }
.kpi small { color: var(--faint); font-size: 12px; line-height: 19px; }
.kpi small, .kpi p { white-space: nowrap; }
.kpi .chip svg { width: 20px; height: 20px; }
.chip { display: grid; place-items: center; flex: none; width: 42px; height: 42px; border-radius: 11px; }
.chip.small { width: 34px; height: 34px; border-radius: 8px; }
.chip.small svg { width: 18px; height: 18px; }
.green { background: #e4f6ee; color: var(--green); }
.teal { background: #e5f3f8; color: var(--primary); }
.blue { background: #e7f2fd; color: var(--blue); }
.red { background: #ffe9e8; color: var(--red); }
.amber { background: #fef6e3; color: #b58930; }

.row { display: grid; gap: 16px; }
.charts { grid-template-columns: minmax(0, 3fr) minmax(0, 2fr); }
.status { grid-template-columns: minmax(0, 2fr) minmax(0, 1fr); }
.card-head { display: flex; justify-content: space-between; align-items: center; height: 20px; margin-bottom: 12px; }
.card-head h3 { font-size: 15px; font-weight: 600; }
.card-head a { color: var(--primary); font-size: 13px; font-weight: 500; }
.card-head span { color: var(--muted); font-size: 12px; }
.inset { height: 48px; margin: 0; padding: 4px 16px 0; }

.plot { border: 1px solid var(--line); border-radius: 3px; }
.plot-bar { display: flex; align-items: center; gap: 8px; height: 43px; padding: 0 12px; border-bottom: 1px solid var(--line); }
.plot-bar span { margin-right: auto; color: var(--muted); font-size: 12px; }
.plot-bar .soft { padding: 0 13px; font-size: 12px; }
.chart { width: 100%; height: auto; stroke: none; }
.chart text { fill: #7f8190; font-size: 11px; }
.chart .ct { fill: var(--ink); font-size: 13px; font-weight: 600; }
.chart .ylab text { text-anchor: end; }
.chart .xlab text { text-anchor: middle; }
.chart .legend g { fill: #fff; stroke-width: 2; }
.grid { stroke: #e3e6ea; stroke-width: 1; }
.axis { stroke: #d0d3d9; stroke-width: 1; }
.series path { stroke-width: 5; stroke-linejoin: round; }
.area { fill: #b3d1e3; stroke: #8fb4d6; stroke-width: 1; }
.grip { fill: #fff; stroke: #b4bede; stroke-width: 1; }
.plot-foot { padding: 0 8px 4px; color: #35ab7c; font-size: 11px; line-height: 16px; }

.net { display: flex; flex-direction: column; }
.map { position: relative; flex: 1; min-height: 300px; margin-bottom: 4px; overflow: hidden; border: 1px solid var(--line); border-radius: 4px; }
.map > svg { position: absolute; width: 100%; height: 100%; stroke: none; }
.urban { fill: #d2d0d0; }
.st { stroke: none; }
.map pattern path { stroke: #b2b4b9; stroke-width: 2; }
.olive { fill: #d4da9c; }
.boundary { fill: none; stroke: #a78fa9; stroke-width: 3; stroke-dasharray: 14 4; }
.sec { fill: none; stroke: #f7bb6b; stroke-width: 5; stroke-linejoin: round; }
.trunk { fill: none; stroke: #ee8a6e; stroke-width: 7; stroke-linejoin: round; }
.mway { fill: none; stroke: #dc5f82; stroke-width: 8; stroke-linejoin: round; }
.labels { font-family: "Noto Sans", sans-serif; fill: #222; stroke: #fff; stroke-opacity: .8; stroke-width: 5; paint-order: stroke; }
.isle { fill: #8a6799; font-style: italic; }
.zone { fill: #a580a8; }
.shield rect { fill: #efc5cc; stroke: #d6818f; stroke-width: 3; }
.shield text { fill: #5e1a30; stroke: none; font-size: 29px; text-anchor: middle; }
.pins { fill: #2ab27b; stroke: #fff; stroke-width: 6; }
.zoom { position: absolute; top: 10px; left: 10px; border: 2px solid rgba(0, 0, 0, .22); border-radius: 4px; background-clip: padding-box; }
.zoom button { display: block; width: 30px; height: 30px; padding: 0; border: 0; background: #fff; color: #000; font: bold 24px/28px "Liberation Sans", sans-serif; }
.zoom button:first-child { border-bottom: 1px solid #ccc; border-radius: 2px 2px 0 0; }
.zoom button:last-child { border-radius: 0 0 2px 2px; }
.credit {
  position: absolute; right: 0; bottom: 0; display: flex; align-items: center; gap: 3px;
  padding: 0 5px; background: rgba(255, 255, 255, .8); color: #333;
  font: 12px/17px "Liberation Sans", sans-serif;
}
.credit svg { width: 12px; height: 8px; stroke: none; }
.credit a { color: #0078a8; }

table { width: 100%; table-layout: fixed; border-collapse: collapse; }
.c1 { width: 222px; } .c2 { width: 106px; } .c3 { width: 186px; } .c4 { width: 183px; } .c5 { width: 160px; }
th, td { padding: 0 14px; text-align: left; font-weight: 400; }
th {
  height: 41px; background: var(--soft); border-bottom: 1px solid #d3d6df;
  color: var(--muted); font-size: 11px; font-weight: 600; letter-spacing: .06em; white-space: nowrap;
}
td { height: 59px; border-bottom: 1px solid var(--line); color: var(--muted); }
td b { color: var(--ink); font-weight: 700; }
.num { text-align: right; }
.point { display: flex; align-items: center; gap: 10px; }
.point small { font-size: 12px; line-height: 16px; }
code { color: var(--ink); font: 500 14px/18px var(--mono); }
.use { display: flex; align-items: center; gap: 8px; font-size: 12px; }
.use span:last-child { min-width: 34px; text-align: right; }
.bar { flex: 1; height: 7px; border-radius: 4px; background: var(--soft); }
.bar i { display: block; height: 7px; border-radius: 4px; background: var(--green); }
.over i { background: var(--red); }
.badge {
  display: inline-flex; align-items: center; gap: 5px;
  padding: 0 9px; border-radius: 11px; font-size: 12px; line-height: 21px; font-weight: 600;
}
.badge::before { content: ""; width: 6px; height: 6px; border-radius: 50%; background: currentColor; }
.ok { background: #e4f6ee; color: var(--green); }
.bad { background: #ffe9e8; color: var(--red); }
.alerts .card-head { margin-bottom: 22px; }
.alert { display: flex; align-items: center; gap: 9px; }
.alerts p { margin-top: 3px; color: var(--muted); font-size: 13px; }
```
